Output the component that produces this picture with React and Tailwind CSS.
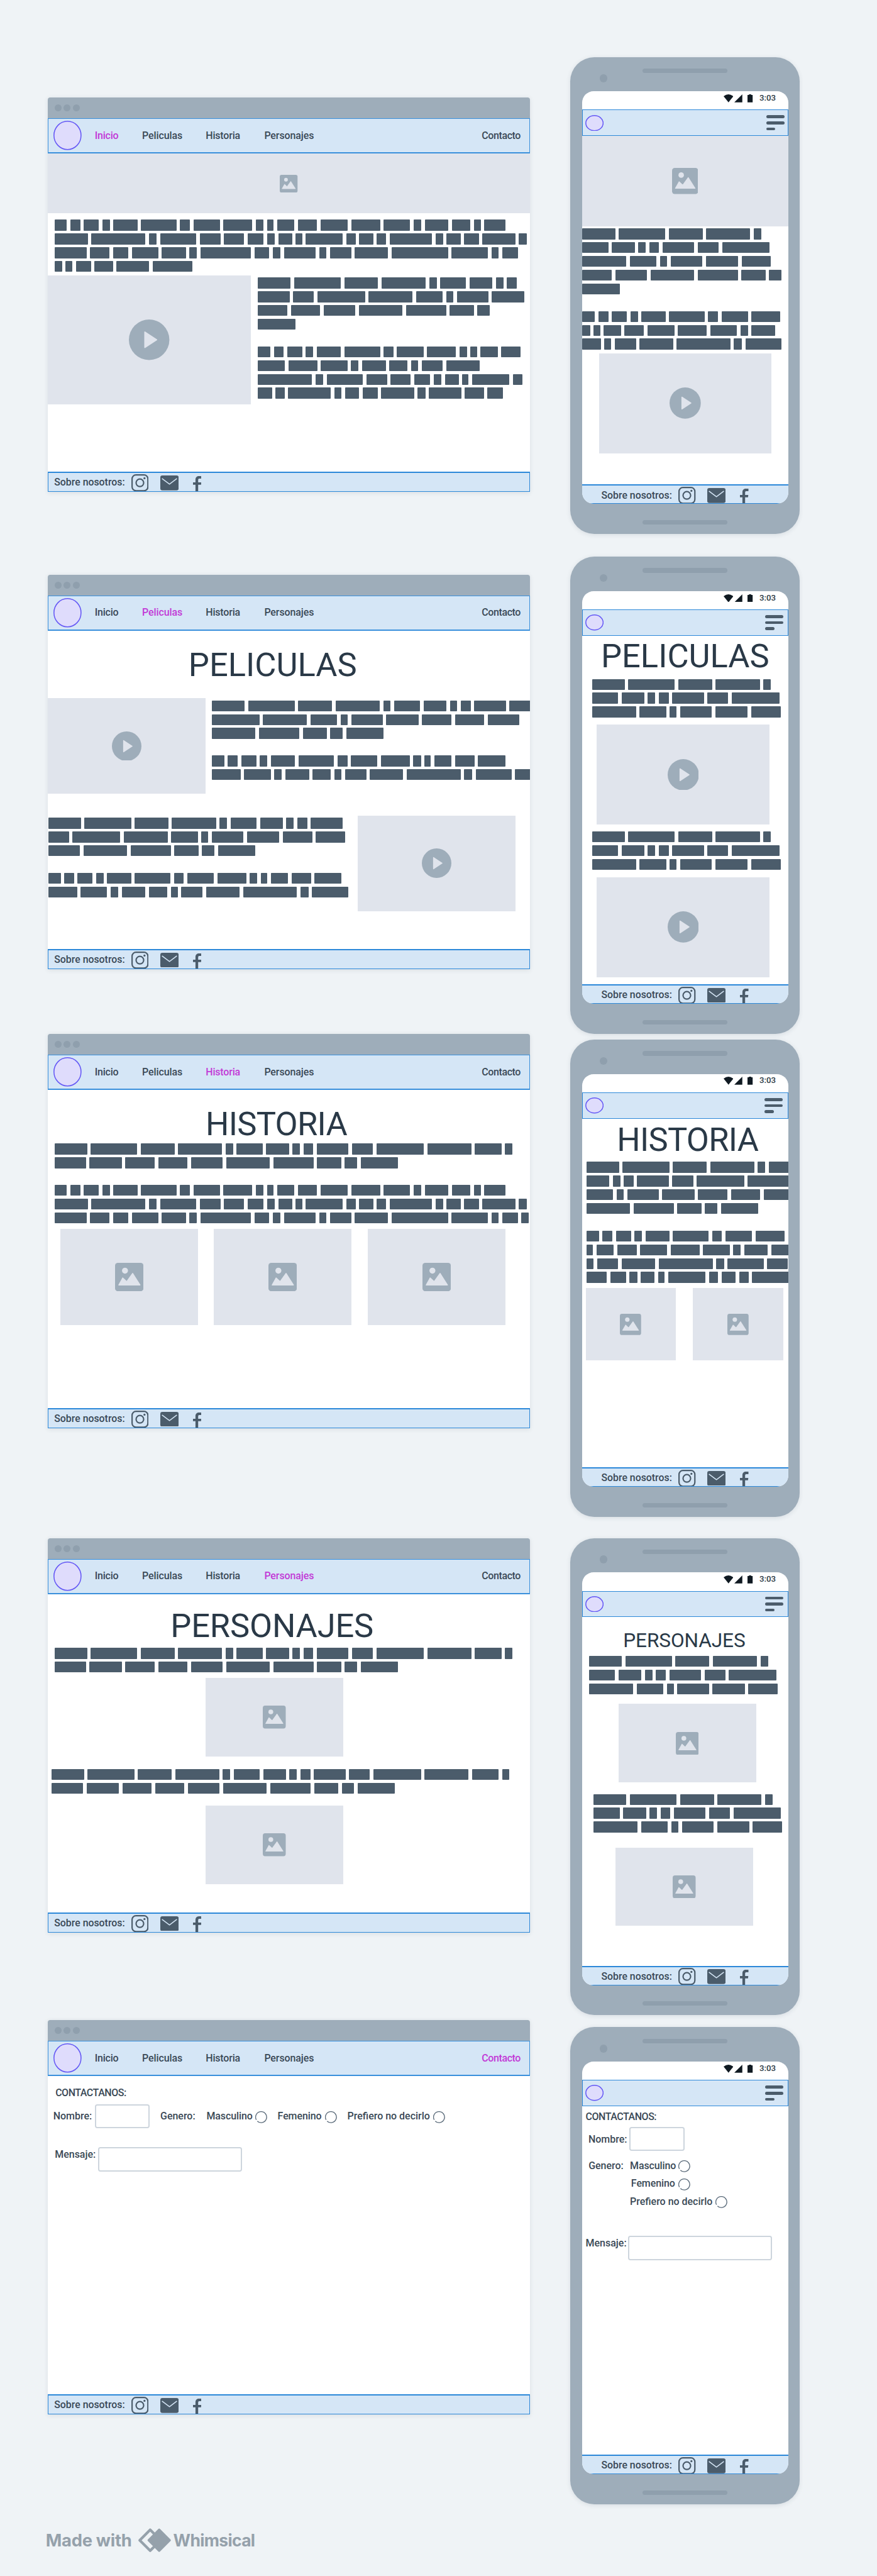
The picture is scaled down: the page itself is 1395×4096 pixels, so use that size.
import React from "react";

const FONT = "font-['Roboto',sans-serif]";

/* Word widths (px) of the two placeholder paragraphs. */
const A = [
  57, 81.3, 59, 77, 13, 45.3, 39.7, 13, 17.3, 55.3, 36.3, 83, 76.7, 46.3, 12.5, 55, 56.3, 51.3, 51, 55.3, 76, 70.3,
  42, 21.7, 65.3,
];
const B = [
  21.7, 17.3, 26.3, 13, 42, 62.2, 17.2, 46.3, 50.2, 13.5, 11.3, 30, 33.8, 47.3, 50.3, 46.3, 13.3, 41.3, 32, 12.3, 37,
  58.3, 94, 14, 62.8, 36, 35.2, 27.6, 13.6, 24.2, 11.3, 65, 16.2, 24.5, 16.2, 74, 13, 24.7, 26, 57.2, 14, 56, 33.8,
  27, 46, 42, 13.5, 87.7, 26, 13.5, 55.3, 12.5, 37.2, 58, 98.8, 63, 13, 27, 13.5, 11.8, 26.4, 32, 57.2, 69,
];

const a = (from, to) => A.slice(from, to + 1);
const b = (from, to) => B.slice(from, to + 1);
const GAP = [];

function Blocks({ rows, className = "" }) {
  return (
    <div className={"flex flex-col gap-[5px] " + className}>
      {rows.map((row, i) => (
        <div key={i} className="flex h-[19px] gap-[6.1px]">
          {row.map((w, j) => (
            <span key={j} className="h-full shrink-0 rounded-[1px] bg-[#4b5c6b]" style={{ width: w }} />
          ))}
        </div>
      ))}
    </div>
  );
}

function ImageBox({ className = "", icon }) {
  return (
    <div className={"flex shrink-0 items-center justify-center bg-[#e0e4ec] " + className}>
      <svg viewBox="0 0 100 100" className={icon}>
        <rect width="100" height="100" rx="10" fill="#9eadba" />
        <circle cx="35" cy="27.5" r="10.5" fill="#e0e4ec" />
        <path
          d="M13 78L27 53L41 66L62 37L88 78Z"
          fill="#e0e4ec"
          stroke="#e0e4ec"
          strokeWidth="3"
          strokeLinejoin="round"
        />
      </svg>
    </div>
  );
}

function VideoBox({ className = "", icon }) {
  return (
    <div className={"flex shrink-0 items-center justify-center bg-[#e0e4ec] " + className}>
      <svg viewBox="0 0 100 100" className={icon}>
        <circle cx="50" cy="50" r="50" fill="#9eadba" />
        <path
          d="M39.5 31L68.5 50L39.5 69Z"
          fill="#e0e4ec"
          stroke="#e0e4ec"
          strokeWidth="3"
          strokeLinejoin="round"
        />
      </svg>
    </div>
  );
}

function Logo({ width, height }) {
  return (
    <svg width={width} height={height} className="shrink-0">
      <ellipse
        cx={width / 2}
        cy={height / 2}
        rx={width / 2 - 0.9}
        ry={height / 2 - 0.9}
        fill="#dfdcfc"
        stroke="#6558f5"
        strokeWidth="1.7"
      />
    </svg>
  );
}

function Social({ className = "" }) {
  return (
    <div
      className={
        "flex shrink-0 overflow-hidden border-t-[2.2px] border-[#2c88d9] bg-[#d5e6f6] text-[#3a4956] " + className
      }
    >
      <span className="mt-[4.5px] w-[134.5px] text-[17.4px] leading-6 font-medium whitespace-nowrap">
        Sobre nosotros:
      </span>
      <svg viewBox="0 0 30 30" className="mt-[2px] h-[30px] w-[30px] shrink-0" fill="none" stroke="#4b5c6b">
        <rect x="1.2" y="1.2" width="27.6" height="27.6" rx="6.8" strokeWidth="2.4" />
        <circle cx="14.8" cy="15" r="6.6" strokeWidth="2.4" />
        <circle cx="22.8" cy="7.1" r="1.8" fill="#4b5c6b" stroke="none" />
      </svg>
      <svg viewBox="0 0 32 26" className="mt-[4px] ml-[20.5px] h-[26px] w-8 shrink-0">
        <rect width="32" height="26" rx="3.5" fill="#4b5c6b" />
        <path d="M2.9 5.4L16 15.2L28.9 5.4" fill="none" stroke="#d5e6f6" strokeWidth="1.7" />
      </svg>
      <svg viewBox="0 0 15 30" className="mt-[5px] ml-[24.7px] h-[30px] w-[15px] shrink-0" fill="#4b5c6b">
        <path d="M4.3 30V15H0V11H4.3V6.5C4.3 2.2 6.7 0 10.8 0H14.8V4.3H11.5C9.8 4.3 9 5 9 6.6V11H14.6L14 15H9V30Z" />
      </svg>
    </div>
  );
}

function NavItem({ name, active, className = "" }) {
  return <span className={className + (active === name ? " text-[#c23ad6]" : " text-[#3a4956]")}>{name}</span>;
}

function Browser({ active, className = "", children }) {
  return (
    <section
      className={
        "flex h-[687px] w-[841px] flex-col overflow-hidden rounded-t-[4px] bg-white shadow-[0_2px_8px_rgba(30,50,70,0.1)] " +
        className
      }
    >
      <div className="flex h-9 shrink-0 items-center gap-[4px] bg-[#9eadba] pl-3">
        <i className="h-3 w-3 rounded-full bg-[#8f9fad]" />
        <i className="h-3 w-3 rounded-full bg-[#8f9fad]" />
        <i className="h-3 w-3 rounded-full bg-[#8f9fad]" />
      </div>
      <nav className="flex h-[61.5px] shrink-0 items-center border border-b-[2.2px] border-[#3a90dc] bg-[#d5e6f6] pr-[15.5px] pl-[9px] text-[17.5px] leading-6 font-medium">
        <Logo width={49} height={51} />
        <NavItem name="Inicio" active={active} className="ml-[23px] w-[82.6px] tracking-[-0.2px]" />
        <NavItem name="Peliculas" active={active} className="w-[111px] tracking-[-0.1px]" />
        <NavItem name="Historia" active={active} className="w-[102px] tracking-[-0.2px]" />
        <NavItem name="Personajes" active={active} className="tracking-[-0.1px]" />
        <NavItem name="Contacto" active={active} className="ml-auto tracking-[-0.4px]" />
      </nav>
      <div className="flex grow flex-col overflow-hidden">{children}</div>
      <Social className="h-[35px] border-x border-b pl-[10.4px]" />
    </section>
  );
}

function Phone({ className = "", menu = "mr-[7px]", children }) {
  return (
    <section
      className={
        "flex h-[831.3px] w-[400px] flex-col items-center rounded-[42px] bg-[#9eadba] shadow-[0_2px_8px_rgba(30,50,70,0.1)] " +
        className
      }
    >
      <div className="flex h-[60px] w-full shrink-0">
        <div className="mt-[30px] ml-[51px] h-[14px] w-[14px] rounded-full bg-[#8f9fad]" />
        <div className="mt-5 ml-[61px] h-[8px] w-[148px] rounded-full bg-[#8f9fad]" />
      </div>
      <div className="flex h-[719px] w-[359.5px] shrink-0 flex-col overflow-hidden rounded-[20px] bg-white">
        <div className="flex h-[32px] shrink-0 items-start justify-end pt-[5px] pr-[21.5px]">
          <svg viewBox="0 0 17 14" className="h-[14px] w-[17px]" fill="#101a22">
            <path d="M0 3.4Q8.5 -3.4 17 3.4L8.5 14Z" />
          </svg>
          <svg viewBox="0 0 14 14" className="ml-[2.5px] h-[14px] w-[14px]" fill="#101a22">
            <path d="M14 0V14H0Z" />
          </svg>
          <svg viewBox="0 0 9 14" className="ml-[9px] h-[14px] w-[9px]" fill="#101a22">
            <path d="M2.5 0h4v1.2H9V14H0V1.2h2.5Z" />
          </svg>
          <span className="ml-[11.5px] text-[14.5px] leading-[14px] font-medium text-[#2c3a45]">3:03</span>
        </div>
        <nav className="flex h-[45.7px] shrink-0 items-center justify-between border border-[#2c88d9] bg-[#d5e6f6] pl-[4.5px]">
          <Logo width={32} height={28} />
          <div className={"flex flex-col gap-[5.5px] " + menu}>
            <i className="h-[5px] w-8 rounded-full bg-[#4b5c6b]" />
            <i className="h-[5px] w-8 rounded-full bg-[#4b5c6b]" />
            <i className="h-[5px] w-4 rounded-full bg-[#4b5c6b]" />
          </div>
        </nav>
        <div className="flex grow flex-col overflow-hidden">{children}</div>
        <Social className="h-[34px] border-b pl-[33.8px]" />
      </div>
      <div className="mt-[28px] h-[8px] w-[148px] rounded-full bg-[#8f9fad]" />
    </section>
  );
}

function Title({ className = "", children }) {
  return (
    <h1 className={"mb-[-1.3px] shrink-0 pt-[1.3px] whitespace-nowrap text-[#2a3947] " + className}>{children}</h1>
  );
}

function Label({ className = "", children }) {
  return (
    <span
      className={
        "mb-[-0.8px] shrink-0 pt-[0.8px] text-[17.5px] leading-6 font-medium whitespace-nowrap text-[#3a4956] " +
        className
      }
    >
      {children}
    </span>
  );
}

function Field({ className = "" }) {
  return <div className={"h-[42px] shrink-0 rounded-[4px] border-[2.2px] border-[#cdd5dd] bg-white " + className} />;
}

function Radio({ className = "" }) {
  return (
    <svg viewBox="0 0 21 21" className={"h-[21px] w-[21px] shrink-0 " + className} fill="none">
      <path d="M1.9 15A9.6 9.6 0 1 1 3.6 17.2" stroke="#5b6b7a" strokeWidth="1.5" />
    </svg>
  );
}

const PHONE_TEXT = [a(0, 4), a(5, 11), a(12, 17)];

export default function App() {
  return (
    <div className="h-[4096px] w-[1395px] overflow-hidden bg-[#eff3f6]">
      <main className={"flex h-[4489px] w-[1529px] items-start pl-[83px] [zoom:0.9126] " + FONT}>
        <div className="flex w-[911px] shrink-0 flex-col">
          <Browser active="Inicio" className="mt-[170px]">
            <ImageBox className="h-[104.5px] w-full" icon="h-[31px] w-[31px]" />
            <Blocks className="mt-[11px] pl-[11.8px]" rows={[b(0, 20), b(21, 40), b(41, 57), b(58, 63)]} />
            <div className="mt-[6px] flex items-start">
              <VideoBox className="h-[224.7px] w-[354.7px]" icon="h-[70.6px] w-[70.6px]" />
              <Blocks
                className="mt-[3.7px] ml-[11.8px]"
                rows={[a(0, 8), a(9, 16), a(17, 23), a(24, 24), GAP, b(0, 12), b(13, 21), b(22, 32), b(33, 43)]}
              />
            </div>
          </Browser>

          <Browser active="Peliculas" className="mt-[144.6px]">
            <Title className="mt-[35.3px] ml-[245.6px] text-[57.5px] leading-[48px]">PELICULAS</Title>
            <div className="mt-[34px] flex items-start">
              <VideoBox className="h-[166.5px] w-[275.5px]" icon="h-[51.5px] w-[51.5px]" />
              <Blocks
                className="mt-[4px] ml-[10.8px]"
                rows={[a(0, 10), a(11, 19), a(20, 24), GAP, b(0, 13), b(14, 25)]}
              />
            </div>
            <div className="mt-[38.3px] flex items-start">
              <Blocks
                className="mt-[3.7px] ml-[1.1px] w-[539.4px] shrink-0"
                rows={[a(0, 9), a(10, 18), a(19, 24), GAP, b(0, 13), b(14, 24)]}
              />
              <VideoBox className="h-[166.5px] w-[275.5px]" icon="h-[51.5px] w-[51.5px]" />
            </div>
          </Browser>

          <Browser active="Historia" className="mt-[113px]">
            <Title className="mt-[35.3px] ml-[275.4px] text-[57.5px] leading-[48px] tracking-[-0.8px]">HISTORIA</Title>
            <Blocks
              className="mt-[10.2px] pl-[11.8px]"
              rows={[a(0, 14), a(15, 24), GAP, b(0, 20), b(21, 40), b(41, 58)]}
            />
            <div className="mt-[9.8px] flex gap-[28.4px] pl-[22px]">
              <ImageBox className="h-[168px] w-[239.7px]" icon="h-[49.5px] w-[49.5px]" />
              <ImageBox className="h-[168px] w-[239.7px]" icon="h-[49.5px] w-[49.5px]" />
              <ImageBox className="h-[168px] w-[239.7px]" icon="h-[49.5px] w-[49.5px]" />
            </div>
          </Browser>

          <Browser active="Personajes" className="mt-[191.6px]">
            <Title className="mt-[30.5px] ml-[214.3px] text-[57.5px] leading-[48px] tracking-[-0.2px]">
              PERSONAJES
            </Title>
            <Blocks className="mt-[15px] pl-[11.8px]" rows={[a(0, 14), a(15, 24)]} />
            <ImageBox className="mt-[9.8px] ml-[275.6px] h-[136.4px] w-[239.7px]" icon="h-10 w-10" />
            <Blocks className="mt-[22px] pl-[6.7px]" rows={[a(0, 14), a(15, 24)]} />
            <ImageBox className="mt-[20.9px] ml-[275.6px] h-[136.4px] w-[239.7px]" icon="h-10 w-10" />
          </Browser>

          <Browser active="Contacto" className="mt-[152.8px]">
            <Label className="mt-[16.2px] ml-[13.6px] tracking-[-0.5px]">CONTACTANOS:</Label>
            <div className="mt-[8.3px] flex items-start pl-[9.8px]">
              <Label className="mt-[8.5px] w-[72.2px]">Nombre:</Label>
              <Field className="w-[95.5px]" />
              <Label className="mt-[8.5px] ml-[19px] w-[80.5px]">Genero:</Label>
              <Label className="mt-[8.5px] w-[84.5px] tracking-[-0.1px]">Masculino</Label>
              <Radio className="mt-[13px]" />
              <Label className="mt-[8.5px] ml-[18.5px] w-[82.2px] tracking-[-0.1px]">Femenino</Label>
              <Radio className="mt-[13px]" />
              <Label className="mt-[8.5px] ml-[18.4px] w-[149.2px]">Prefiero no decirlo</Label>
              <Radio className="mt-[13px]" />
            </div>
            <div className="mt-[33.3px] flex items-start pl-[12.6px]">
              <Label className="w-[75.4px]">Mensaje:</Label>
              <Field className="w-[250.5px]" />
            </div>
          </Browser>

          <footer className="mt-[197.5px] flex h-[44px] items-center text-[#95a1ab]">
            <span className="ml-[-3.2px] w-[161.2px] font-['Inter',sans-serif] text-[30px] leading-[44px] font-bold tracking-[-0.3px] whitespace-nowrap">
              Made with
            </span>
            <svg viewBox="0 0 57 42" className="h-[42px] w-[57px] shrink-0">
              <path
                d="M20.7 2.8L38.9 21L20.7 39.2L2.5 21Z"
                fill="none"
                stroke="#95a1ab"
                strokeWidth="4.6"
                strokeLinejoin="round"
              />
              <path
                d="M36.4 3L54.4 21L36.4 39L18.4 21Z"
                fill="#95a1ab"
                stroke="#95a1ab"
                strokeWidth="4.4"
                strokeLinejoin="round"
              />
            </svg>
            <span className="ml-[4px] font-['Inter',sans-serif] text-[29px] leading-[44px] font-bold tracking-[-0.7px]">
              Whimsical
            </span>
          </footer>
        </div>

        <div className="flex flex-col">
          <Phone className="mt-[99.2px]" menu="mr-[5px]">
            <ImageBox className="h-[157.4px] w-full" icon="h-[45.5px] w-[45.5px]" />
            <Blocks
              className="mt-[3.8px] pl-px"
              rows={[...PHONE_TEXT, a(18, 23), a(24, 24), GAP, b(0, 8), b(9, 17), b(18, 24)]}
            />
            <VideoBox className="mt-[6.8px] ml-[29.7px] h-[174px] w-[301px]" icon="h-[54.5px] w-[54.5px]" />
          </Phone>

          <Phone className="mt-[39.5px]">
            <Title className="mt-[11.4px] ml-[33.3px] text-[57.5px] leading-[48px]">PELICULAS</Title>
            <Blocks className="mt-[15.9px] pl-[17.7px]" rows={PHONE_TEXT} />
            <VideoBox className="mt-[12.4px] ml-[25.7px] h-[174.2px] w-[301px]" icon="h-[54.5px] w-[54.5px]" />
            <Blocks className="mt-[12.2px] pl-[17.7px]" rows={PHONE_TEXT} />
            <VideoBox className="mt-[12.9px] ml-[25.7px] h-[174px] w-[301px]" icon="h-[54.5px] w-[54.5px]" />
          </Phone>

          <Phone className="mt-[10.2px]" menu="mr-[8px]">
            <Title className="mt-[11.6px] ml-[61px] text-[57.5px] leading-[48px] tracking-[-0.8px]">HISTORIA</Title>
            <Blocks
              className="mt-[15.5px] pl-[8px]"
              rows={[
                a(0, 5),
                a(6, 12),
                a(13, 19),
                a(20, 24),
                GAP,
                b(0, 8),
                b(10, 18),
                b(19, 25),
                b(26, 35),
              ]}
            />
            <div className="mt-[9.5px] flex gap-[30px] pl-[6.7px]">
              <ImageBox className="h-[125.6px] w-[157px]" icon="h-[37px] w-[37px]" />
              <ImageBox className="h-[125.6px] w-[157px]" icon="h-[37px] w-[37px]" />
            </div>
          </Phone>

          <Phone className="mt-[37.2px]">
            <Title className="mt-[23.6px] ml-[72px] text-[34.6px] leading-8 tracking-[-0.1px]">PERSONAJES</Title>
            <Blocks className="mt-[11.8px] pl-[12.7px]" rows={PHONE_TEXT} />
            <ImageBox className="mt-[17px] ml-[63.7px] h-[136.5px] w-[240px]" icon="h-10 w-10" />
            <Blocks className="mt-[20.3px] pl-[20.7px]" rows={PHONE_TEXT} />
            <ImageBox className="mt-[26.2px] ml-[58.7px] h-[136.5px] w-[240px]" icon="h-10 w-10" />
          </Phone>

          <Phone className="mt-[20.9px]">
            <Label className="mt-[6.1px] ml-[6.6px] tracking-[-0.5px]">CONTACTANOS:</Label>
            <div className="mt-[6px] flex items-start pl-[11.3px]">
              <Label className="mt-[9px] w-[71.4px]">Nombre:</Label>
              <Field className="w-24" />
            </div>
            <div className="mt-[13.5px] flex items-start pl-[11.6px]">
              <Label className="w-[72.2px]">Genero:</Label>
              <div className="flex flex-col gap-[6.8px]">
                <div className="flex items-start">
                  <Label className="w-[84px] tracking-[-0.1px]">Masculino</Label>
                  <Radio className="mt-[3px]" />
                </div>
                <div className="flex items-start pl-[2px]">
                  <Label className="w-[82px] tracking-[-0.1px]">Femenino</Label>
                  <Radio className="mt-[3px]" />
                </div>
                <div className="flex items-start">
                  <Label className="w-[149px]">Prefiero no decirlo</Label>
                  <Radio className="mt-[3px]" />
                </div>
              </div>
            </div>
            <div className="mt-[48.8px] flex items-start pl-[6.6px]">
              <Label className="w-[74.1px]">Mensaje:</Label>
              <Field className="w-[251px]" />
            </div>
          </Phone>
        </div>
      </main>
    </div>
  );
}
